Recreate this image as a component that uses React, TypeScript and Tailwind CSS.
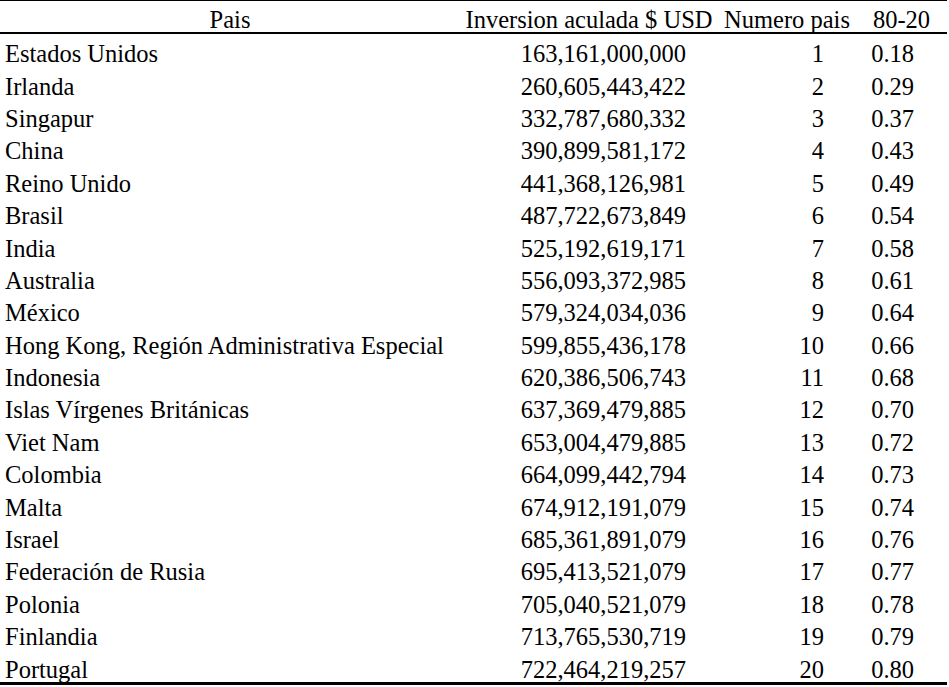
import React from "react";

const rows: [string, string, number, string][] = [
  ["Estados Unidos", "163,161,000,000", 1, "0.18"],
  ["Irlanda", "260,605,443,422", 2, "0.29"],
  ["Singapur", "332,787,680,332", 3, "0.37"],
  ["China", "390,899,581,172", 4, "0.43"],
  ["Reino Unido", "441,368,126,981", 5, "0.49"],
  ["Brasil", "487,722,673,849", 6, "0.54"],
  ["India", "525,192,619,171", 7, "0.58"],
  ["Australia", "556,093,372,985", 8, "0.61"],
  ["México", "579,324,034,036", 9, "0.64"],
  ["Hong Kong, Región Administrativa Especial", "599,855,436,178", 10, "0.66"],
  ["Indonesia", "620,386,506,743", 11, "0.68"],
  ["Islas Vírgenes Británicas", "637,369,479,885", 12, "0.70"],
  ["Viet Nam", "653,004,479,885", 13, "0.72"],
  ["Colombia", "664,099,442,794", 14, "0.73"],
  ["Malta", "674,912,191,079", 15, "0.74"],
  ["Israel", "685,361,891,079", 16, "0.76"],
  ["Federación de Rusia", "695,413,521,079", 17, "0.77"],
  ["Polonia", "705,040,521,079", 18, "0.78"],
  ["Finlandia", "713,765,530,719", 19, "0.79"],
  ["Portugal", "722,464,219,257", 20, "0.80"],
];

export default function App() {
  return (
    <div
      className="w-[949px] h-[687px] bg-white text-black text-[24.5px]"
      style={{ fontFamily: '"Liberation Serif", "Times New Roman", serif' }}
    >
      <div className="w-[947px] border-t border-black border-b-[3px]">
        <div className="grid grid-cols-[460px_258px_138px_91px] h-[33px] border-b-2 border-black leading-[29px] whitespace-nowrap">
          <div className="text-center pt-[3.5px]">Pais</div>
          <div className="text-center pt-[3.5px]">Inversion aculada $ USD</div>
          <div className="text-center pt-[3.5px]">Numero pais</div>
          <div className="text-center pt-[3.5px]">80-20</div>
        </div>
        {rows.map(([p, inv, n, r]) => (
          <div
            key={n}
            className="grid grid-cols-[460px_258px_138px_91px] h-[32.4px] leading-[29px] whitespace-nowrap"
          >
            <div className="pl-[5px] pt-[5.2px]">{p}</div>
            <div className="text-right pr-[32px] pt-[5.2px]">{inv}</div>
            <div className="text-right pr-[32px] pt-[5.2px]">{n}</div>
            <div className="text-right pr-[33px] pt-[5.2px]">{r}</div>
          </div>
        ))}
      </div>
    </div>
  );
}
